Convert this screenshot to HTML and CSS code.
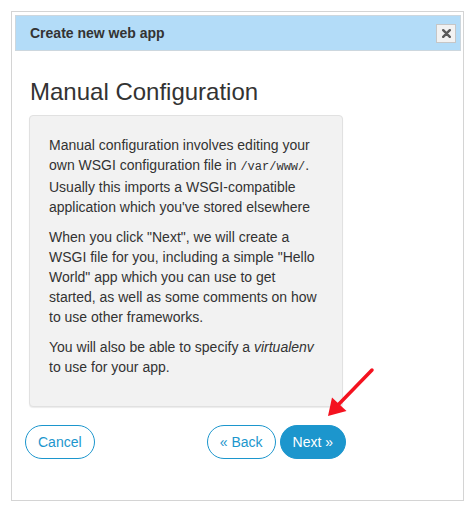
FILE: index.html
```html
<!DOCTYPE html>
<html lang="en">
<head>
    <meta charset="UTF-8">
    <meta name="viewport" content="width=device-width, initial-scale=1.0">
    <title>Create new web app</title>
    <link rel="stylesheet" href="styles.css">
</head>
<body>

<div class="dialog">
    <div class="dialog-header">
        <span class="dialog-title">Create new web app</span>
        <button class="close-btn" type="button" aria-label="Close">
            <svg width="9" height="9" viewBox="0 0 9 9">
                <path d="M1.2 1.2 L7.8 7.8 M7.8 1.2 L1.2 7.8" stroke="#5a5a5a" stroke-width="2.4" stroke-linecap="round"/>
            </svg>
        </button>
    </div>

    <div class="dialog-body">
        <h3>Manual Configuration</h3>
        <div class="well">
            <p>Manual configuration involves editing your own WSGI configuration file in <code>/var/www/</code>. Usually this imports a WSGI-compatible application which you've stored elsewhere</p>
            <p>When you click "Next", we will create a WSGI file for you, including a simple "Hello World" app which you can use to get started, as well as some comments on how to use other frameworks.</p>
            <p>You will also be able to specify a <em>virtualenv</em> to use for your app.</p>
        </div>

        <div class="dialog-footer">
            <button class="btn" type="button">Cancel</button>
            <div class="btn-group">
                <button class="btn" type="button">&laquo; Back</button>
                <button class="btn btn-primary" type="button">Next &raquo;</button>
            </div>
        </div>
    </div>
</div>

<!-- annotation arrow -->
<svg class="arrow" width="474" height="511" viewBox="0 0 474 511">
    <line x1="372" y1="370" x2="338" y2="405" stroke="#f4121f" stroke-width="3.5" stroke-linecap="round"/>
    <polygon points="328,416 332,397.5 346.5,411" fill="#f4121f"/>
</svg>

</body>
</html>
```

FILE: styles.css
```css
body {
    font-family: "Liberation Sans", Arial, sans-serif;
    font-size: 14px;
    line-height: 20px;
    color: #333;
    margin: 0;
    background-color: #fff;
}

.dialog {
    box-sizing: border-box;
    width: 453px;
    height: 490px;
    margin: 11px 0 0 11px;
    padding: 3px 2px 3px 3px;
    border: 1px solid #d4d4d4;
}

.dialog-header {
    display: flex;
    align-items: center;
    justify-content: space-between;
    padding: 7px 4px 7px 14px;
    background-color: #b3dcf8;
    border: 1px solid #cdd7de;
}

.dialog-title {
    font-weight: bold;
    font-size: 14px;
}

.close-btn {
    box-sizing: border-box;
    width: 20px;
    height: 19px;
    padding: 0;
    display: flex;
    align-items: center;
    justify-content: center;
    background-color: #f2f2f2;
    border: 1px solid #c6c6c6;
    cursor: pointer;
}

.dialog-body {
    padding: 0 0 0 14px;
}

h3 {
    font-size: 24px;
    font-weight: normal;
    line-height: 40px;
    margin: 21px 0 3px 0;
    padding-left: 1px;
}

.well {
    box-sizing: border-box;
    width: 314px;
    padding: 19px;
    background-color: #f2f2f2;
    border: 1px solid #e1e1e1;
    border-radius: 4px;
    box-shadow: 0 1px 1px rgba(0, 0, 0, 0.08);
}

.well p {
    margin: 0 0 10px 0;
}

code {
    font-family: "Liberation Mono", "Courier New", monospace;
    font-size: 12px;
}

.dialog-footer {
    display: flex;
    justify-content: space-between;
    width: 321px;
    margin: 18px 0 0 -4px;
}

.btn-group {
    display: flex;
    gap: 4px;
}

.btn {
    box-sizing: border-box;
    height: 34px;
    padding: 6px 12px;
    font-family: inherit;
    font-size: 14px;
    line-height: 20px;
    color: #1c96cd;
    background-color: #fff;
    border: 1px solid #1c96cd;
    border-radius: 17px;
    cursor: pointer;
}

.btn-primary {
    color: #fff;
    background-color: #1c96cd;
}

.arrow {
    position: absolute;
    top: 0;
    left: 0;
    pointer-events: none;
}
```
